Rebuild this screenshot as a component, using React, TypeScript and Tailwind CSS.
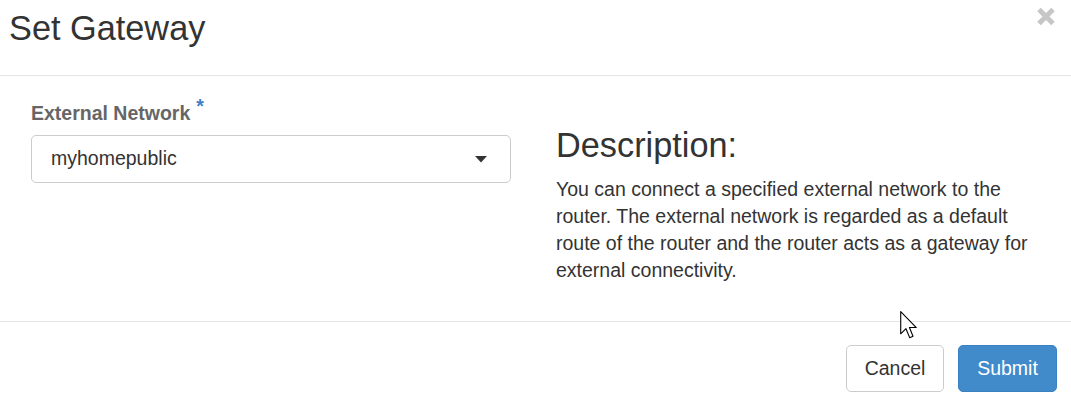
import React from "react";

export default function App() {
  return (
    <div className="relative w-[1071px] h-[404px] bg-white text-[#333] font-['Liberation_Sans',Arial,sans-serif] overflow-hidden">
      {/* header */}
      <div className="flex items-start justify-between h-[76px] border-b border-[#e5e5e5] pl-[9px] pr-[15px]">
        <h4 className="pt-[9px] text-[34.3px] leading-[38px] font-normal">Set Gateway</h4>
        <button className="mt-[7px] w-[20px] h-[19px]" aria-label="Close">
          <svg width="20" height="19" viewBox="0 0 20 19">
            <path d="M3 2.5 L17 16.5 M17 2.5 L3 16.5" stroke="#c6c6c6" strokeWidth="5" />
          </svg>
        </button>
      </div>

      {/* body */}
      <div className="flex pl-[31px] pt-[24px] pb-[37px] border-b border-[#e5e5e5]">
        <div className="w-[480px]">
          <label className="block text-[19.5px] leading-[27px] font-bold text-[#666]">
            External Network
            <span className="relative top-[-7px] ml-[6px] text-[#3a7fc8]">*</span>
          </label>
          <div className="mt-[8px] flex items-center justify-between h-[48px] border border-[#ccc] rounded-[5px] pl-[19px] pr-[23px] text-[19.5px]">
            <span>myhomepublic</span>
            <svg width="12" height="7" viewBox="0 0 12 7">
              <path d="M0 0 L12 0 L6 6.5 Z" fill="#333" />
            </svg>
          </div>
        </div>
        <div className="ml-[45px] w-[485px] pt-[27px]">
          <h3 className="text-[34.3px] leading-[37px] font-normal">Description:</h3>
          <p className="mt-[12px] text-[19.5px] leading-[27px]">
            You can connect a specified external network to the router. The external network is regarded as a default
            route of the router and the router acts as a gateway for external connectivity.
          </p>
        </div>
      </div>

      {/* footer */}
      <div className="flex justify-end gap-[14px] pt-[23px] pr-[14px]">
        <button className="w-[98px] h-[47px] border border-[#ccc] rounded-[5px] bg-white text-[19.5px] text-[#333]">
          Cancel
        </button>
        <button className="w-[99px] h-[47px] border border-[#3a80c2] rounded-[5px] bg-[#428bca] text-[19.5px] text-white">
          Submit
        </button>
      </div>

      {/* mouse pointer */}
      <svg className="absolute left-[900px] top-[311px]" width="18" height="29" viewBox="0 0 13 21">
        <path
          d="M0.5 0.5 L0.5 16.5 L4.3 12.8 L7 19.3 L9.4 18.3 L6.8 12 L11.8 12 Z"
          fill="white"
          stroke="black"
          strokeWidth="0.8"
          strokeLinejoin="round"
        />
      </svg>
    </div>
  );
}
